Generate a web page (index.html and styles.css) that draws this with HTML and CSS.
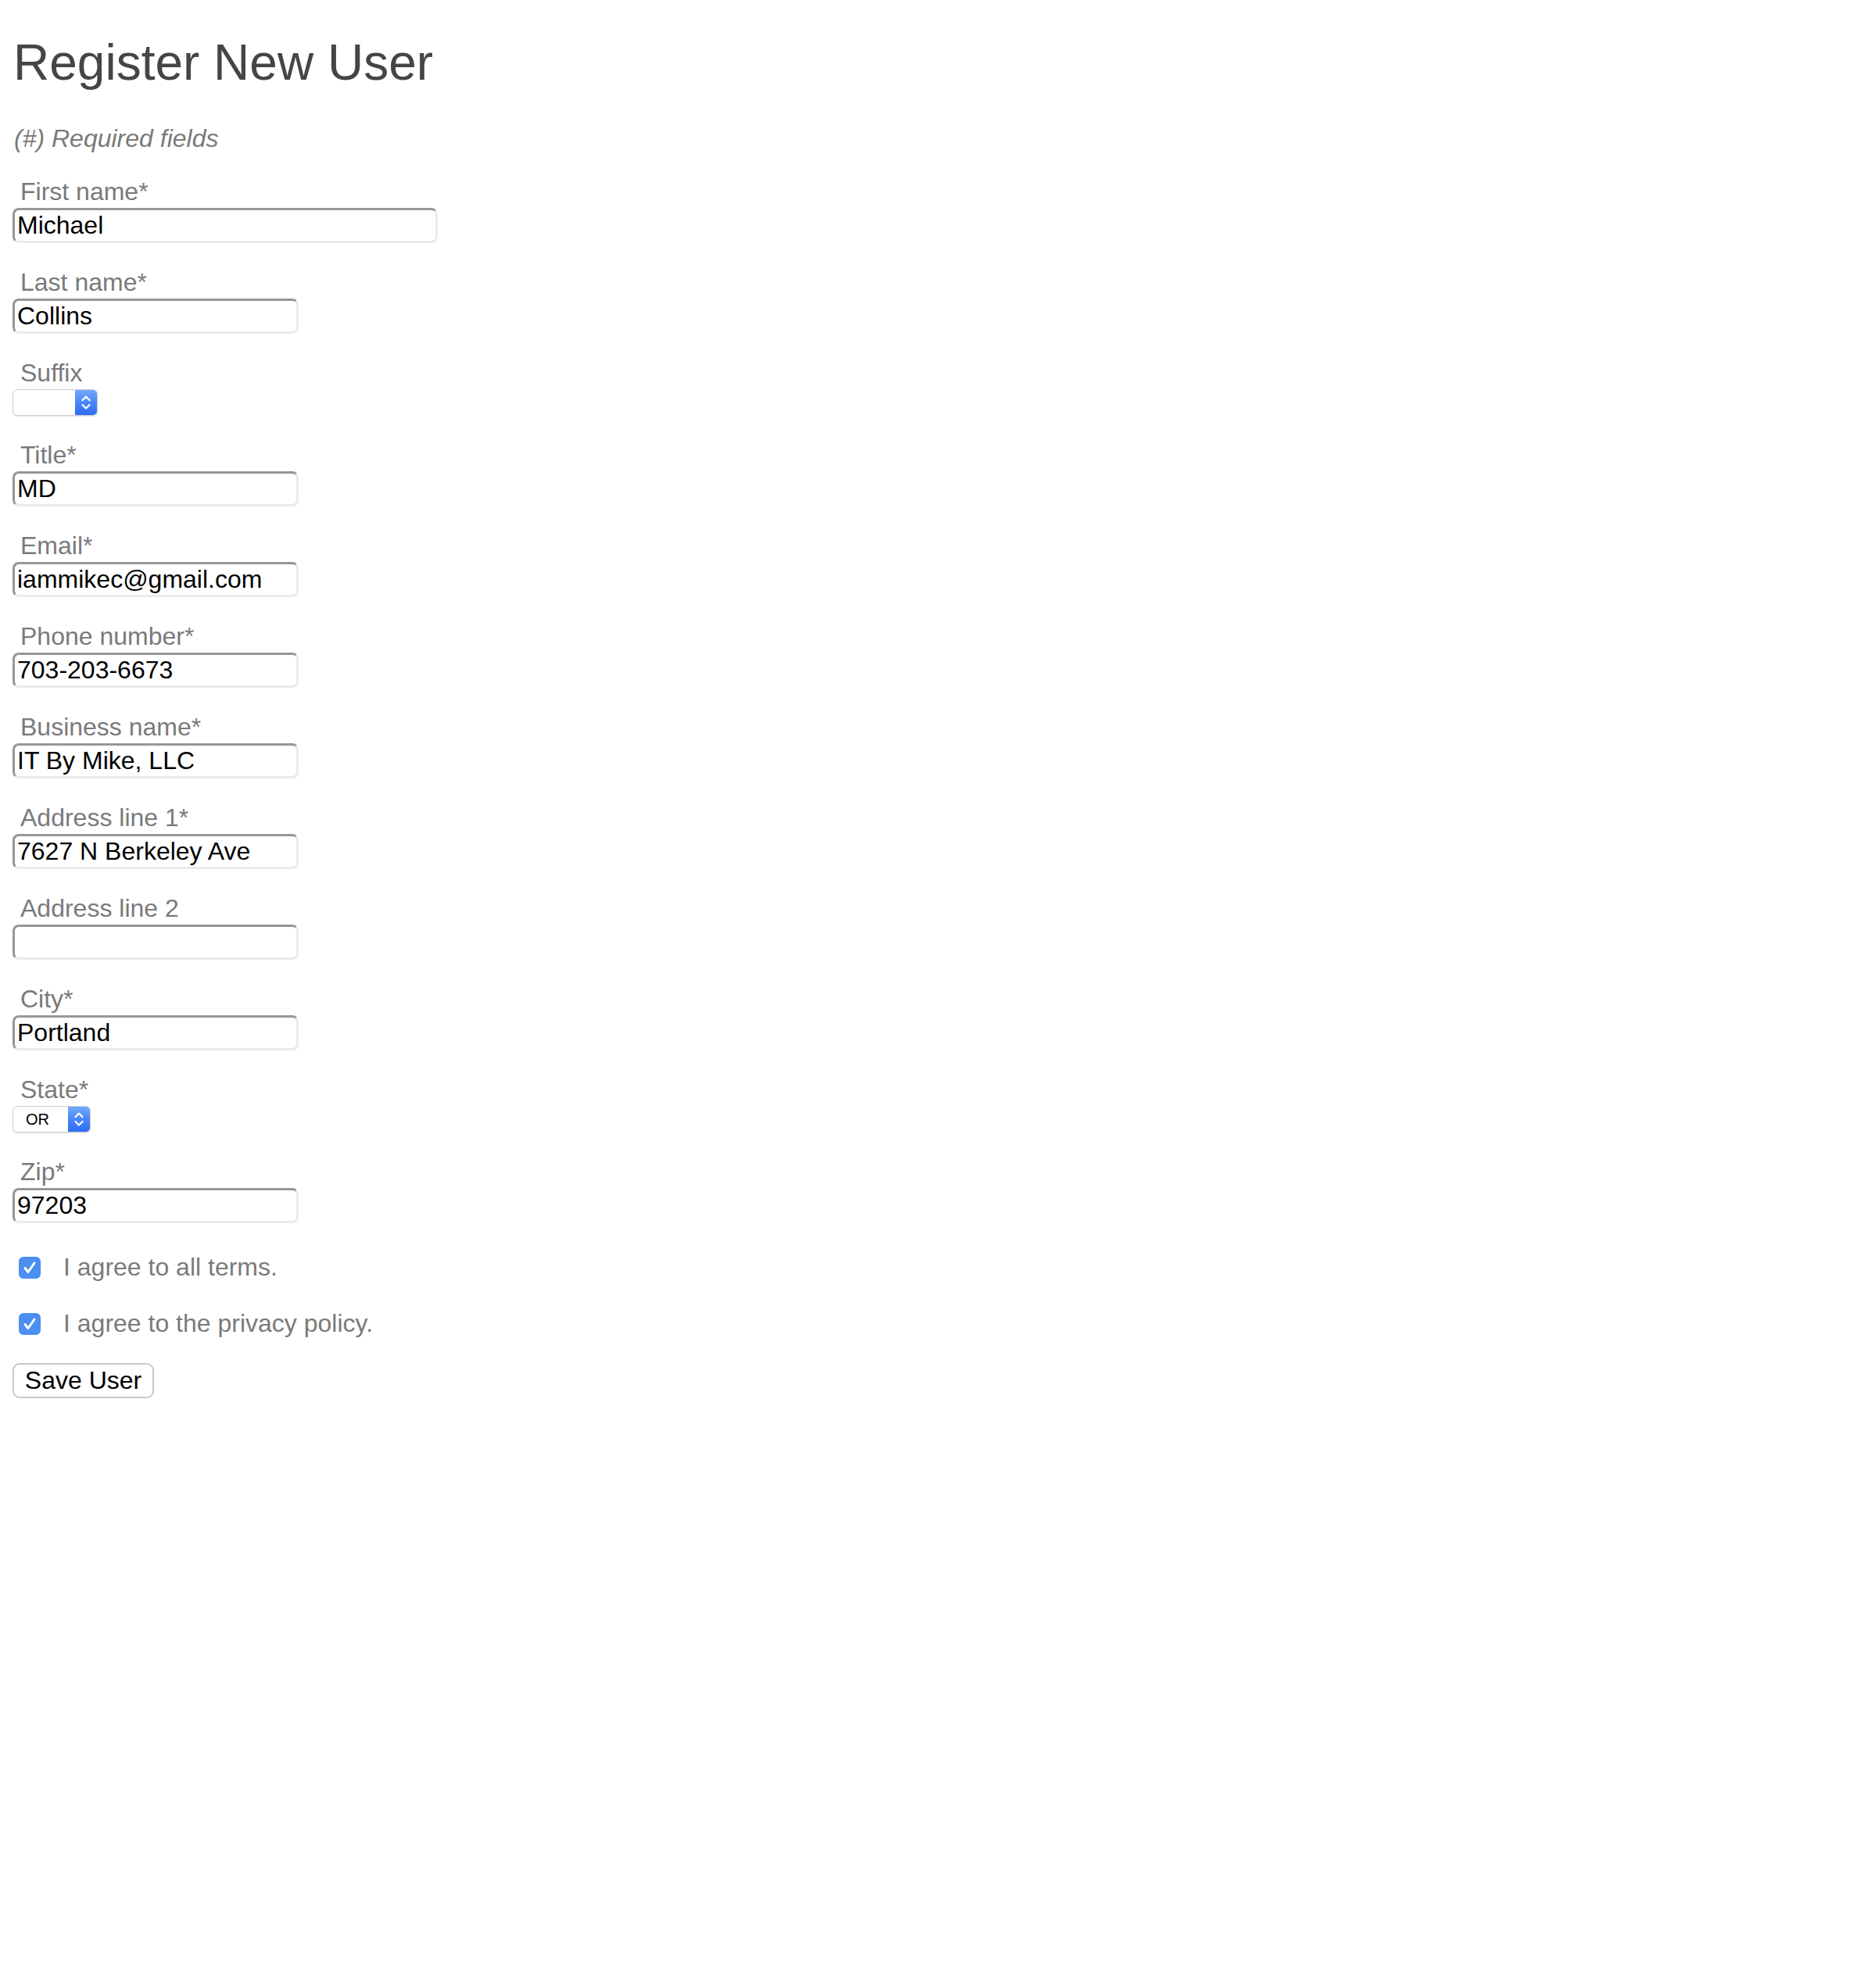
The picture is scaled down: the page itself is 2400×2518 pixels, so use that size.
FILE: index.html
```html
<!DOCTYPE html>
<html lang="en">
<head>
<meta charset="utf-8">
<title>Register New User</title>
<link rel="stylesheet" href="styles.css">
</head>
<body>
<h1 class="page-title">Register New User</h1>
<p class="required-note">(#) Required fields</p>
<form class="user-form">
  <div class="field">
    <label class="field-label">First name*</label>
    <input class="text-input wide" type="text" value="Michael">
  </div>
  <div class="field">
    <label class="field-label">Last name*</label>
    <input class="text-input" type="text" value="Collins">
  </div>
  <div class="field">
    <label class="field-label">Suffix</label>
    <div class="select-box suffix-select">
      <span class="select-value"></span>
      <span class="select-arrows"><svg viewBox="0 0 28 34" width="28" height="34"><polyline points="9.5,14 14,9.5 18.5,14" /><polyline points="9.5,20 14,24.5 18.5,20" /></svg></span>
    </div>
  </div>
  <div class="field">
    <label class="field-label">Title*</label>
    <input class="text-input" type="text" value="MD">
  </div>
  <div class="field">
    <label class="field-label">Email*</label>
    <input class="text-input" type="text" value="iammikec@gmail.com">
  </div>
  <div class="field">
    <label class="field-label">Phone number*</label>
    <input class="text-input" type="text" value="703-203-6673">
  </div>
  <div class="field">
    <label class="field-label">Business name*</label>
    <input class="text-input" type="text" value="IT By Mike, LLC">
  </div>
  <div class="field">
    <label class="field-label">Address line 1*</label>
    <input class="text-input" type="text" value="7627 N Berkeley Ave">
  </div>
  <div class="field">
    <label class="field-label">Address line 2</label>
    <input class="text-input" type="text" value="">
  </div>
  <div class="field">
    <label class="field-label">City*</label>
    <input class="text-input" type="text" value="Portland">
  </div>
  <div class="field">
    <label class="field-label">State*</label>
    <div class="select-box state-select">
      <span class="select-value">OR</span>
      <span class="select-arrows"><svg viewBox="0 0 28 34" width="28" height="34"><polyline points="9.5,14 14,9.5 18.5,14" /><polyline points="9.5,20 14,24.5 18.5,20" /></svg></span>
    </div>
  </div>
  <div class="field">
    <label class="field-label">Zip*</label>
    <input class="text-input" type="text" value="97203">
  </div>
  <div class="check-row first-check">
    <span class="check-box"><svg viewBox="0 0 28 28" width="28" height="28"><polyline points="8,14.5 12,19.5 20,8" /></svg></span>
    <span class="check-text">I agree to all terms.</span>
  </div>
  <div class="check-row second-check">
    <span class="check-box"><svg viewBox="0 0 28 28" width="28" height="28"><polyline points="8,14.5 12,19.5 20,8" /></svg></span>
    <span class="check-text">I agree to the privacy policy.</span>
  </div>
  <button class="save-button" type="button">Save User</button>
</form>
</body>
</html>
```

FILE: styles.css
```css
html, body {
  margin: 0;
  padding: 0;
  background: #ffffff;
}

body {
  padding: 0 16px;
  font-family: "Liberation Sans", Arial, Helvetica, sans-serif;
  color: #777777;
}

.page-title {
  margin: 43px 0 0 0;
  padding-left: 1px;
  font-size: 64px;
  line-height: 74px;
  font-weight: normal;
  color: #454545;
}

.required-note {
  margin: 42px 0 0 0;
  padding-left: 2px;
  font-size: 32px;
  line-height: 37px;
  font-style: italic;
  color: #7a7a7a;
}

.user-form {
  margin-top: 31px;
  display: flex;
  flex-direction: column;
  align-items: flex-start;
  gap: 32px;
}

.field {
  display: flex;
  flex-direction: column;
  align-items: flex-start;
  gap: 2px;
}

.field-label {
  padding-left: 10px;
  font-size: 32px;
  line-height: 37px;
  color: #7a7a7a;
}

.text-input {
  -webkit-appearance: none;
  appearance: none;
  box-sizing: border-box;
  width: 366px;
  height: 45px;
  margin: 0;
  padding: 0 3px;
  border: 3px solid;
  border-color: #979797 #ebebeb #ebebeb #979797;
  border-radius: 8px;
  background: #ffffff;
  font-family: "Liberation Sans", Arial, Helvetica, sans-serif;
  font-size: 32px;
  color: #000000;
  outline: none;
}

.text-input.wide {
  width: 544px;
}

.select-box {
  box-sizing: border-box;
  height: 34px;
  display: flex;
  align-items: stretch;
  border: 1px solid #cfcfcf;
  border-radius: 6px;
  background: #ffffff;
  box-shadow: 0 1px 1px rgba(0, 0, 0, 0.12);
  overflow: hidden;
}

.suffix-select {
  width: 109px;
}

.state-select {
  width: 100px;
}

.select-value {
  flex: 1;
  padding-left: 16px;
  font-family: "Liberation Sans", Arial, Helvetica, sans-serif;
  font-size: 20px;
  line-height: 32px;
  color: #000000;
}

.select-arrows {
  width: 28px;
  display: flex;
  align-items: center;
  justify-content: center;
  background: linear-gradient(to bottom, #72aafb 0%, #4a86f7 50%, #2e6cf5 100%);
}

.select-arrows svg {
  display: block;
}

.select-arrows polyline {
  fill: none;
  stroke: #ffffff;
  stroke-width: 2.2;
  stroke-linecap: round;
  stroke-linejoin: round;
}

.check-row {
  display: flex;
  align-items: center;
  gap: 29px;
  padding-left: 8px;
  height: 37px;
}

.first-check {
  margin-top: 6px;
}

.second-check {
  margin-top: 3px;
}

.check-box {
  width: 28px;
  height: 28px;
  border-radius: 6px;
  background: #4b8ff1;
  display: block;
}

.check-box svg {
  display: block;
}

.check-box polyline {
  fill: none;
  stroke: #ffffff;
  stroke-width: 3;
  stroke-linecap: round;
  stroke-linejoin: round;
}

.check-text {
  font-size: 32px;
  line-height: 37px;
  color: #7a7a7a;
}

.save-button {
  box-sizing: border-box;
  width: 181px;
  height: 45px;
  margin: 0;
  padding: 0;
  border: 2px solid #c8c8c8;
  border-radius: 9px;
  background: #ffffff;
  font-family: "Liberation Sans", Arial, Helvetica, sans-serif;
  font-size: 32px;
  color: #000000;
  text-align: center;
}
```
